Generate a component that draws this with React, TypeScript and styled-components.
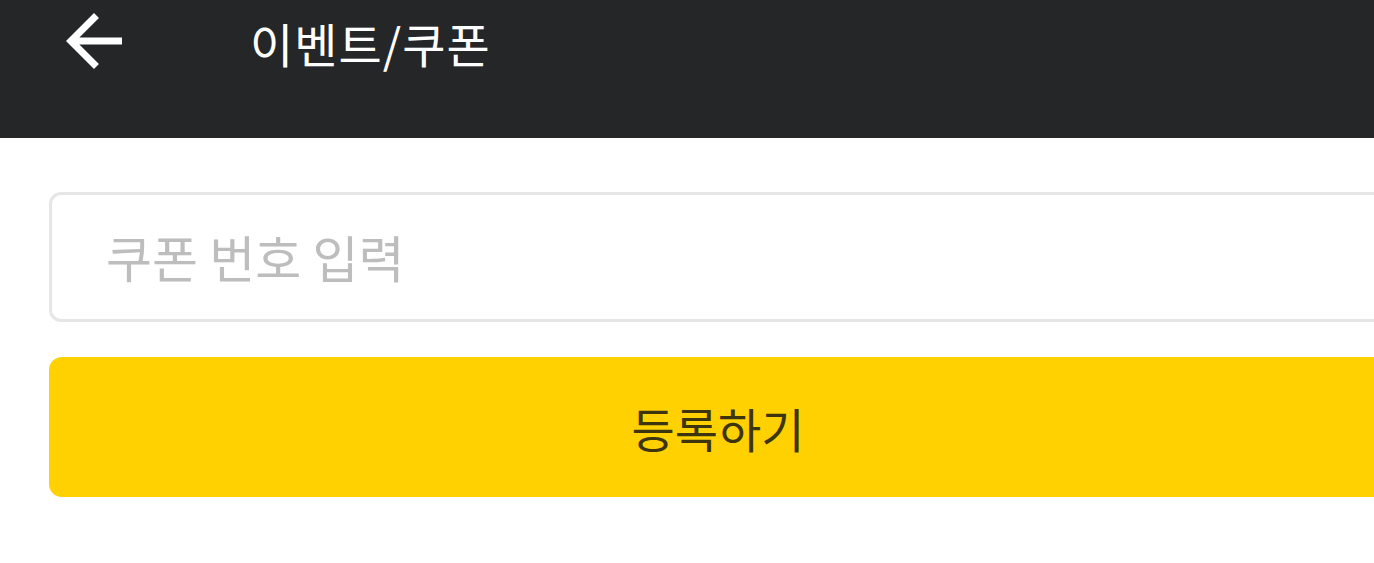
import React from "react";
import styled, { createGlobalStyle } from "styled-components";

const GlobalStyle = createGlobalStyle`
  html, body {
    margin: 0;
    padding: 0;
    background: #ffffff;
    overflow: hidden;
  }
  body {
    font-family: "Noto Sans CJK KR", "Noto Sans", sans-serif;
  }
  * { box-sizing: border-box; }
`;

const Page = styled.div`
  width: 1436px;
  min-height: 563px;
  background: #ffffff;
`;

const Header = styled.header`
  height: 138px;
  background: #252628;
`;

const Toolbar = styled.div`
  height: 84px;
  display: flex;
  align-items: center;
  padding-left: 66px;
`;

const BackButton = styled.button`
  width: 56px;
  height: 56px;
  padding: 0;
  border: none;
  background: transparent;
  display: flex;
  align-items: center;
  justify-content: center;
  cursor: pointer;
  margin-top: -2px;
`;

const Title = styled.h1`
  margin: 0 0 0 128px;
  font-family: "Noto Sans CJK KR", "Noto Sans", sans-serif;
  font-size: 47px;
  letter-spacing: 1px;
  font-weight: 400;
  color: #ffffff;
  line-height: 1;
`;

const Content = styled.main`
  padding: 54px 49px 0;
  display: flex;
  flex-direction: column;
  gap: 35px;
`;

const Input = styled.input`
  width: 100%;
  height: 130px;
  border: 3px solid #e6e6e6;
  border-radius: 12px;
  padding: 0 0 2px 54px;
  font-family: "Noto Sans CJK KR", "Noto Sans", sans-serif;
  font-size: 50px;
  color: #333333;
  background: #ffffff;
  outline: none;
  &::placeholder {
    color: #bdbdbd;
  }
`;

const SubmitButton = styled.button`
  width: 100%;
  height: 140px;
  border: none;
  border-radius: 13px;
  background: #ffd100;
  font-family: "Noto Sans CJK KR", "Noto Sans", sans-serif;
  font-size: 47px;
  font-weight: 400;
  color: #3d3510;
  cursor: pointer;
`;

const ArrowIcon = () => (
  <svg width="56" height="56" viewBox="4 4 16 16" aria-hidden="true">
    <path
      fill="#ffffff"
      d="M20 11H7.83l5.59-5.59L12 4l-8 8 8 8 1.41-1.41L7.83 13H20v-2z"
    />
  </svg>
);

export default function App() {
  return (
    <>
      <GlobalStyle />
      <Page>
        <Header>
          <Toolbar>
            <BackButton aria-label="뒤로가기">
              <ArrowIcon />
            </BackButton>
            <Title>이벤트/쿠폰</Title>
          </Toolbar>
        </Header>
        <Content>
          <Input placeholder="쿠폰 번호 입력" />
          <SubmitButton>등록하기</SubmitButton>
        </Content>
      </Page>
    </>
  );
}
